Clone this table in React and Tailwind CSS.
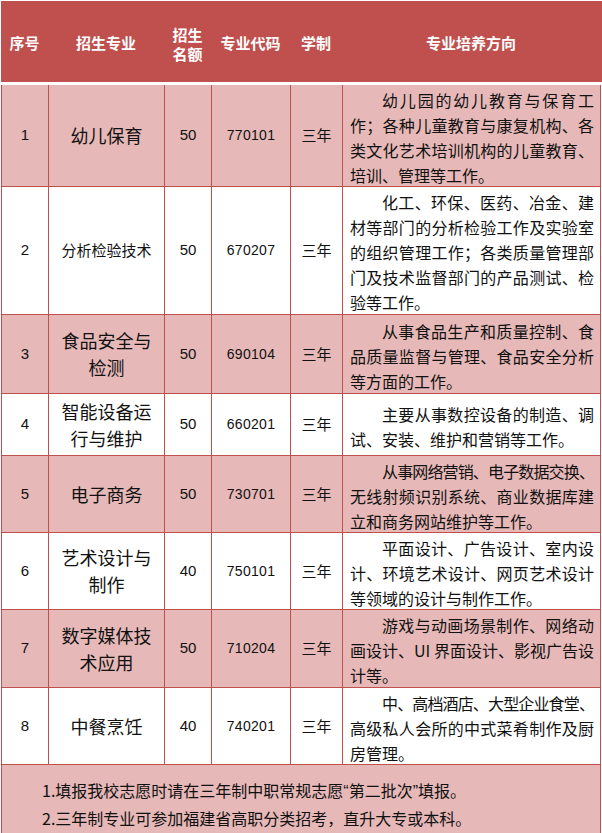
import React from 'react';

// fonts: CJK stack on the page, Latin stack for the digit columns
const latin = "[font-family:'Liberation_Sans','Noto_Sans_CJK_SC',sans-serif]";

const rows = [
    {
        no: '1', name: ['幼儿保育'], count: '50', code: '770101', h: 'h-[102px]', pink: true,
        lines: ['幼儿园的幼儿教育与保育工', '作；各种儿童教育与康复机构、各', '类文化艺术培训机构的儿童教育、', '培训、管理等工作。'],
    },
    {
        no: '2', name: ['分析检验技术'], small: true, count: '50', code: '670207', h: 'h-[128px]',
        lines: ['化工、环保、医药、冶金、建', '材等部门的分析检验工作及实验室', '的组织管理工作；各类质量管理部', '门及技术监督部门的产品测试、检', '验等工作。'],
    },
    {
        no: '3', name: ['食品安全与', '检测'], count: '50', code: '690104', h: 'h-[79px]', pink: true,
        lines: ['从事食品生产和质量控制、食', '品质量监督与管理、食品安全分析', '等方面的工作。'],
    },
    {
        no: '4', name: ['智能设备运', '行与维护'], count: '50', code: '660201', h: 'h-[62px]',
        lines: ['主要从事数控设备的制造、调', '试、安装、维护和营销等工作。'],
    },
    {
        no: '5', name: ['电子商务'], count: '50', code: '730701', h: 'h-[77px]', pink: true, tight: true,
        lines: ['从事网络营销、电子数据交换、', '无线射频识别系统、商业数据库建', '立和商务网站维护等工作。'],
    },
    {
        no: '6', name: ['艺术设计与', '制作'], count: '40', code: '750101', h: 'h-[77px]',
        lines: ['平面设计、广告设计、室内设', '计、环境艺术设计、网页艺术设计', '等领域的设计与制作工作。'],
    },
    {
        no: '7', name: ['数字媒体技', '术应用'], count: '50', code: '710204', h: 'h-[78px]', pink: true,
        lines: ['游戏与动画场景制作、网络动', '画设计、UI 界面设计、影视广告设', '计等。'],
    },
    {
        no: '8', name: ['中餐烹饪'], count: '40', code: '740201', h: 'h-[77px]', tight: true,
        lines: ['中、高档酒店、大型企业食堂、', '高级私人会所的中式菜肴制作及厨', '房管理。'],
    },
];

function Description({ lines, tight }) {
    return (
        <div className="w-full pl-[7px] pr-[6px] pt-[4px] text-[16px] leading-[25px] text-[#111]">
            {lines.map((line, i) => {
                const last = i === lines.length - 1;
                let cls = last ? 'text-left' : '[text-align:justify] [text-align-last:justify]';
                if (i === 0) cls += ' indent-8';
                if (i === 0 && tight) cls += ' tracking-[-0.9px]';
                return <div key={i} className={cls}>{line}</div>;
            })}
        </div>
    );
}

export default function App() {
    return (
        <div className="bg-white w-[602px] h-[833px] overflow-hidden pt-px pl-px [font-family:'Noto_Sans_CJK_SC','Liberation_Sans',sans-serif]">
            {/* header band */}
            <div className="h-[81px] w-[601px] bg-[#c0504d] flex text-white text-[15px] font-bold">
                <div className="w-[47px] flex items-center justify-center pt-[4px]">序号</div>
                <div className="w-[116px] flex items-center justify-center pt-[4px]">招生专业</div>
                <div className="w-[47px] flex items-center justify-center text-center leading-[19px] pt-[4px]">招生<br />名额</div>
                <div className="w-[79px] flex items-center justify-center pt-[4px]">专业代码</div>
                <div className="w-[52px] flex items-center justify-center pt-[4px]">学制</div>
                <div className="w-[258px] flex items-center justify-center pt-[4px]">专业培养方向</div>
            </div>

            <div className="mt-[3px] w-[600px] border-l border-[#c0504d]">
                {rows.map(r => (
                    <div key={r.no} className={`flex border-b border-[#c0504d] ${r.h} ${r.pink ? 'bg-[#e6b8b7]' : 'bg-white'}`}>
                        <div className={`w-[47px] border-r border-[#c0504d] flex items-center justify-center text-[15px] text-[#111] ${latin}`}>{r.no}</div>
                        <div className={`w-[116px] border-r border-[#c0504d] flex flex-col items-center justify-center text-[#111] ${r.small ? 'text-[15px]' : 'text-[18px] leading-[27px]'}`}>
                            {r.name.map(n => <div key={n}>{n}</div>)}
                        </div>
                        <div className={`w-[47px] border-r border-[#c0504d] flex items-center justify-center text-[15px] text-[#111] ${latin}`}>{r.count}</div>
                        <div className={`w-[79px] border-r border-[#c0504d] flex items-center justify-center text-[14px] tracking-[0.3px] text-[#111] ${latin}`}>{r.code}</div>
                        <div className="w-[52px] border-r border-[#c0504d] flex items-center justify-center text-[15px] text-[#111]">三年</div>
                        <div className="w-[258px] border-r border-[#c0504d] flex items-center">
                            <Description lines={r.lines} tight={r.tight} />
                        </div>
                    </div>
                ))}

                <div className="h-[72px] border-r border-[#c0504d] bg-[#e6b8b7] pl-[40px] pt-[12px] text-[16px] leading-[27px] text-[#111]">
                    <div>1.填报我校志愿时请在三年制中职常规志愿<span className={latin}>“</span>第二批次<span className={latin}>”</span>填报。</div>
                    <div>2.三年制专业可参加福建省高职分类招考，直升大专或本科。</div>
                </div>
            </div>
        </div>
    );
}
